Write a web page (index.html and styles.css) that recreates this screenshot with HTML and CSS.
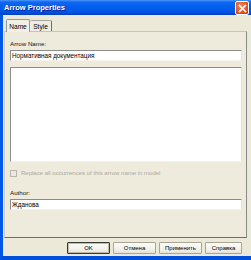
FILE: index.html
```html
<!DOCTYPE html>
<html>
<head>
<meta charset="utf-8">
<link rel="stylesheet" href="styles.css">
</head>
<body>
<div class="window">
  <div class="titlebar">
    <span class="title">Arrow Properties</span>
    <span class="close"><svg width="9" height="9" viewBox="0 0 9 9"><path d="M1.5 1.5 L7.5 7.5 M7.5 1.5 L1.5 7.5" stroke="#fff" stroke-width="1.6" stroke-linecap="square"/></svg></span>
  </div>
  <div class="body">
    <div class="tabs">
      <div class="tab tab-active">Name</div>
      <div class="tab tab-style">Style</div>
    </div>
    <div class="panel">
      <div class="label">Arrow Name:</div>
      <div class="field">Нормативная документация</div>
      <div class="area"></div>
      <div class="check">
        <span class="box"></span>
        <span class="check-text">Replace all occurrences of this arrow name in model</span>
      </div>
      <div class="label label-author">Author:</div>
      <div class="field">Жданова</div>
    </div>
    <div class="buttons">
      <div class="btn btn-default">OK</div>
      <div class="btn">Отмена</div>
      <div class="btn">Применить</div>
      <div class="btn btn-narrow">Справка</div>
    </div>
  </div>
</div>
</body>
</html>
```
FILE: styles.css
```css
html, body {
  margin: 0;
  padding: 0;
  background: #ECE9D8;
}
body {
  width: 251px;
  height: 260px;
  overflow: hidden;
  font-family: "Liberation Sans", Arial, sans-serif;
}
.window {
  width: 251px;
  height: 260px;
  display: flex;
  flex-direction: column;
}
.titlebar {
  height: 15px;
  flex: none;
  display: flex;
  align-items: center;
  justify-content: space-between;
  padding: 0 2px 0 4px;
  box-sizing: border-box;
  background: linear-gradient(#4A98FA 0px, #1466F0 2px, #0060F0 6px, #005AEA 10px, #004ED8 13px, #0040C0 15px);
}
.title {
  color: #fff;
  font-weight: bold;
  font-size: 7.5px;
  letter-spacing: 0;
  text-shadow: 1px 1px 0 #0A1E8C;
}
.close {
  width: 12px;
  height: 12px;
  margin-top: 1px;
  border: 1px solid #fff;
  border-radius: 2px;
  background: radial-gradient(circle at 40% 35%, #F08A62, #DC4A1E 70%, #C63A12);
  display: flex;
  align-items: center;
  justify-content: center;
}
.close svg {
  display: block;
}
.body {
  flex: 1;
  display: flex;
  flex-direction: column;
  border-left: 3px solid #0058E8;
  border-bottom: 4px solid #0050DC;
  background: #ECE9D8;
}
.tabs {
  display: flex;
  align-items: flex-end;
  height: 16px;
  padding-left: 3px;
  flex: none;
}
.tab {
  height: 11px;
  box-sizing: border-box;
  font-size: 6.6px;
  color: #000;
  display: flex;
  align-items: center;
  justify-content: center;
  border: 1px solid #A8A8A0;
  border-bottom: none;
  border-radius: 2px 2px 0 0;
  background: #EFEDE2;
}
.tab-active {
  width: 24px;
  height: 13px;
  margin-bottom: -1px;
  position: relative;
  z-index: 1;
  background: #F2F0E6;
  border-color: #919B9C;
}
.tab-style {
  width: 22px;
  border-left: none;
  border-right: 1px solid #6E6E6E;
}
.panel {
  margin-left: 1px;
  width: 243px;
  height: 207px;
  box-sizing: border-box;
  flex: none;
  border: 1px solid #D8D5C8;
  border-top-color: #C8C5B8;
  border-left-color: #D0CDC0;
  border-right: 1px solid #8A8A88;
  border-bottom: 1px solid #6E6E6C;
  padding: 8px 4px 0 5px;
  background: #EEEBDD;
  display: flex;
  flex-direction: column;
}
.label {
  font-size: 6.2px;
  line-height: 8px;
  height: 8px;
  color: #111;
}
.label-author {
  margin-top: 12px;
}
.field {
  margin-top: 2px;
  height: 11px;
  box-sizing: border-box;
  background: #fff;
  border-top: 1px solid #8C8C88;
  border-left: 1px solid #8C8C88;
  border-right: 1px solid #E4E2D8;
  border-bottom: 1px solid #F4F2EA;
  font-size: 6.3px;
  line-height: 9px;
  padding-left: 1px;
  color: #000;
  white-space: nowrap;
}
.area {
  margin-top: 6px;
  height: 95px;
  box-sizing: border-box;
  background: #fff;
  border-top: 1px solid #8C8C88;
  border-left: 1px solid #8C8C88;
  border-right: 1px solid #E4E2D8;
  border-bottom: 1px solid #F4F2EA;
}
.check {
  margin-top: 7px;
  height: 8px;
  display: flex;
  align-items: center;
  gap: 4px;
}
.box {
  width: 7px;
  height: 7px;
  box-sizing: border-box;
  border: 1px solid #B8B6AC;
  background: #ECEADF;
  flex: none;
}
.check-text {
  font-size: 6px;
  color: #ACA899;
  white-space: nowrap;
}
.buttons {
  margin-top: 4px;
  display: flex;
  gap: 3px;
  padding-left: 64px;
  flex: none;
}
.btn {
  width: 43px;
  height: 12px;
  box-sizing: border-box;
  border: 1px solid #A8A598;
  border-radius: 1px;
  background: linear-gradient(#FCFCF8, #F1EFE6 70%, #E4E1D4);
  font-size: 6px;
  display: flex;
  align-items: center;
  justify-content: center;
  color: #000;
}
.btn-default {
  border: 1px solid #3A3A38;
  box-shadow: inset 0 0 0 1px #BEBAAC;
}
.btn-narrow {
  width: 37px;
}
```
